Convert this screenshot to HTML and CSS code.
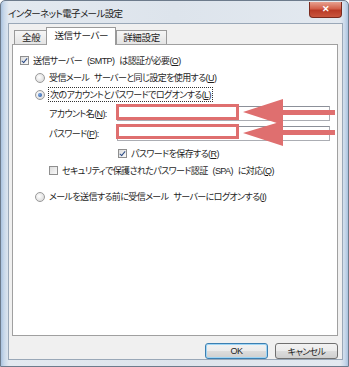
FILE: index.html
```html
<!DOCTYPE html>
<html lang="ja">
<head>
<meta charset="utf-8">
<title>インターネット電子メール設定</title>
<link rel="stylesheet" href="styles.css">
</head>
<body>
<div class="window">
  <div class="titlebar">
    <span class="title">インターネット電子メール設定</span>
    <span class="close">✕</span>
  </div>
  <div class="client">
    <div class="tabs">
      <span class="tab">全般</span>
      <span class="tab active">送信サーバー</span>
      <span class="tab">詳細設定</span>
    </div>
    <div class="panel">
      <div class="row">
        <span class="check on"></span>
        <span>送信サーバー (SMTP) は認証が必要(<u>O</u>)</span>
      </div>
      <div class="row indent1">
        <span class="radio"></span>
        <span>受信メール サーバーと同じ設定を使用する(<u>U</u>)</span>
      </div>
      <div class="row indent1">
        <span class="radio on"></span>
        <span class="focus">次のアカウントとパスワードでログオンする(<u>L</u>)</span>
      </div>
      <div class="field">
        <label>アカウント名(<u>N</u>):</label>
        <span class="input"></span>
      </div>
      <div class="field">
        <label>パスワード(<u>P</u>):</label>
        <span class="input"></span>
      </div>
      <div class="row indent3">
        <span class="check on"></span>
        <span>パスワードを保存する(<u>R</u>)</span>
      </div>
      <div class="row indent2">
        <span class="check"></span>
        <span>セキュリティで保護されたパスワード認証 (SPA) に対応(<u>Q</u>)</span>
      </div>
      <div class="row indent1 gap">
        <span class="radio"></span>
        <span>メールを送信する前に受信メール サーバーにログオンする(<u>I</u>)</span>
      </div>
    </div>
    <div class="buttons">
      <span class="button default">OK</span>
      <span class="button">キャンセル</span>
    </div>
  </div>

  <!-- red markup drawn over the screenshot -->
  <svg class="markup" width="349" height="367" viewBox="0 0 349 367">
    <rect x="117.5" y="105.5" width="120" height="13" fill="none" stroke="#df6f6f" stroke-width="3"/>
    <rect x="117.5" y="125.5" width="120" height="12" fill="none" stroke="#df6f6f" stroke-width="3"/>
    <polygon points="243,112 283,99 283,110 335,110 335,115 283,115 283,125" fill="#df6f6f"/>
    <polygon points="243,133 283,121 283,130 335,130 335,135 283,135 283,146" fill="#df6f6f"/>
  </svg>
</div>
</body>
</html>
```

FILE: styles.css
```css
body {
    margin: 0;
    font-family: "Liberation Sans", "Noto Sans CJK JP", sans-serif;
    font-size: 9px;
    font-feature-settings: "palt";
    letter-spacing: -0.6px;
    word-spacing: 3px;
    color: #1e1e1e;
}
.window {
    position: relative;
    width: 349px;
    height: 367px;
    display: flex;
    flex-direction: column;
    box-sizing: border-box;
    border: 1px solid #6d7b8c;
    border-radius: 5px 5px 0 0;
    background: linear-gradient(to right, #a9c2df 0, #c8d8ea 3px, #e3e9f0 8px, #dde4ec 50%, #e3e9f0 calc(100% - 8px), #c8d8ea calc(100% - 3px), #a9c2df 100%);
}
.titlebar {
    height: 22px;
    display: flex;
    align-items: center;
    justify-content: space-between;
    padding: 0 6px 0 7px;
}
.title {
    font-size: 9.5px;
    color: #222;
    margin-top: 1px;
}
.close {
    width: 33px;
    height: 16px;
    margin-top: -5px;
    box-sizing: border-box;
    border: 1px solid #7a2a1e;
    border-top: none;
    border-radius: 0 0 4px 4px;
    background: linear-gradient(#e7a08f, #d2604a 45%, #b93a26 55%, #c9553d);
    color: #fff;
    font-size: 9px;
    font-weight: bold;
    letter-spacing: 0;
    display: flex;
    align-items: center;
    justify-content: center;
}
.client {
    flex: 1;
    margin: 0 5px 6px 7px;
    background: #f0f0f0;
    border: 1px solid #9aa8b8;
    display: flex;
    flex-direction: column;
    padding: 2px 4px 0 3px;
}
.tabs {
    display: flex;
    align-items: flex-end;
    height: 18px;
    padding-left: 2px;
    font-size: 9.5px;
    letter-spacing: -0.3px;
}
.tab {
    height: 13px;
    line-height: 13px;
    padding: 0 6px;
    border: 1px solid #9a9a9a;
    border-bottom: none;
    background: linear-gradient(#f6f6f6, #e4e4e4);
    margin-right: -1px;
}
.tab.active {
    height: 17px;
    line-height: 15px;
    background: #fff;
    padding: 0 7px;
    margin: 0 0 -1px -1px;
    position: relative;
}
.tab:first-child {
    padding: 0 7px;
}
.panel {
    height: 292px;
    box-sizing: border-box;
    background: #fff;
    border: 1px solid #a0a0a0;
    padding-top: 7px;
}
.row {
    display: flex;
    align-items: center;
    height: 17px;
    padding-left: 7px;
    gap: 4px;
}
.indent1 { padding-left: 22px; }
.indent2 { padding-left: 36px; }
.indent3 { padding-left: 105px; margin-top: 2px; }
.gap { margin-top: 9px; }
.check {
    width: 9px;
    height: 9px;
    flex: none;
    box-sizing: border-box;
    border: 1px solid #8f8f8f;
    background: linear-gradient(135deg, #dcdcdc, #fafafa);
    position: relative;
}
.check.on::after {
    content: "";
    position: absolute;
    left: 2px;
    top: 0;
    width: 2px;
    height: 5px;
    border: solid #2a4a86;
    border-width: 0 1.5px 1.5px 0;
    transform: rotate(40deg);
}
.radio {
    width: 8px;
    height: 8px;
    flex: none;
    border-radius: 50%;
    border: 1px solid #9a9a9a;
    background: radial-gradient(circle at 40% 40%, #fff, #d2d2d2);
    position: relative;
}
.radio.on::after {
    content: "";
    position: absolute;
    left: 2px;
    top: 2px;
    width: 4px;
    height: 4px;
    border-radius: 50%;
    background: radial-gradient(circle at 35% 35%, #7fa8e0, #1d4f9e);
}
.focus {
    outline: 1px dotted #333;
    outline-offset: 0;
    padding: 0 1px;
}
.field {
    display: flex;
    align-items: center;
    height: 19px;
    padding-left: 36px;
    margin-top: 1px;
}
.field label {
    width: 68px;
}
.input {
    width: 213px;
    height: 15px;
    box-sizing: border-box;
    border: 1px solid #abadb3;
    border-top-color: #8c9099;
    background: #fff;
}
.buttons {
    display: flex;
    justify-content: flex-end;
    gap: 7px;
    padding-top: 7px;
}
.button {
    width: 63px;
    height: 16px;
    box-sizing: border-box;
    border: 1px solid #707070;
    border-radius: 3px;
    background: linear-gradient(#f2f2f2 0, #ebebeb 50%, #dddddd 50%, #cfcfcf 100%);
    display: flex;
    align-items: center;
    justify-content: center;
}
.button.default {
    border-color: #3c7fb1;
    box-shadow: inset 0 0 0 1px #9fd5f5;
}
.markup {
    position: absolute;
    left: -1px;
    top: -1px;
    pointer-events: none;
}
```
